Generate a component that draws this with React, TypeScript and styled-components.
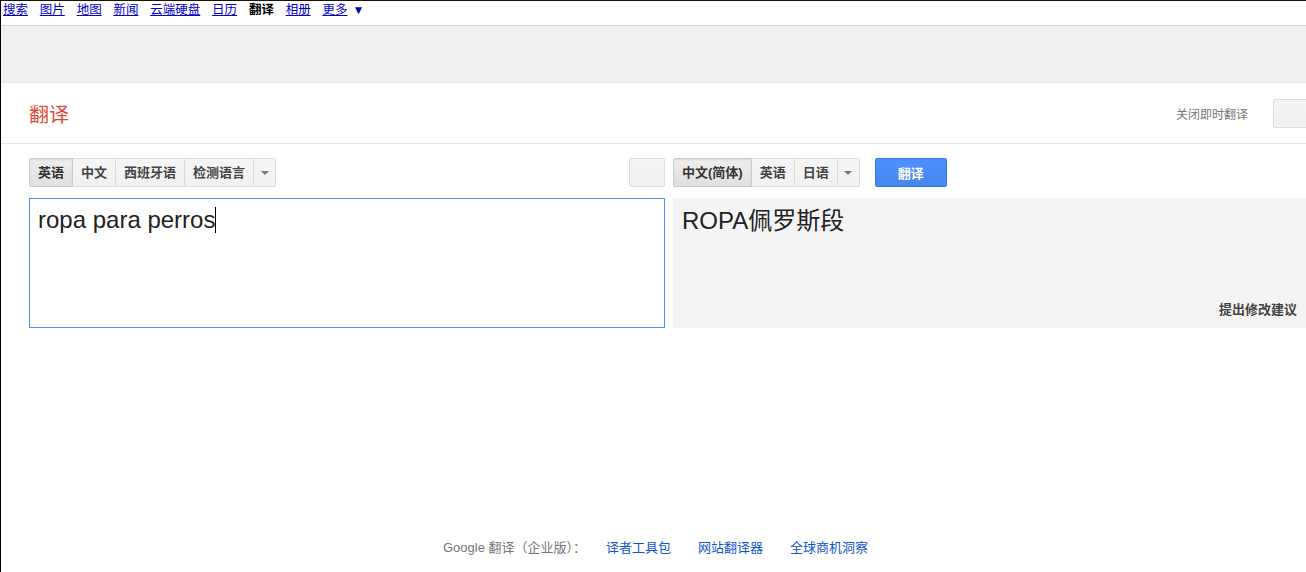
import React from "react";
import styled, { createGlobalStyle, css } from "styled-components";

const GlobalStyle = createGlobalStyle`
  *, *::before, *::after { box-sizing: border-box; }
  html, body { margin: 0; padding: 0; background: #fff; overflow: hidden; }
  body { font-family: "Liberation Sans", Arial, "Noto Sans CJK SC", sans-serif; }
`;

const CJK = `"Liberation Sans", Arial, "Noto Sans CJK SC", sans-serif`;

const Page = styled.div`
  width: 1306px;
  height: 572px;
  border-left: 1px solid #000;
  border-top: 1px solid #1e1000;
  overflow: hidden;
  display: flex;
  flex-direction: column;
  font-family: ${CJK};
`;

const NavBar = styled.nav`
  height: 25px;
  border-bottom: 1px solid #c9d7f1;
  display: flex;
  align-items: flex-start;
  gap: 11.8px;
  padding: 1px 0 0 2px;
  font-size: 12.5px;
  line-height: 17px;
`;

const NavLink = styled.a<{ $active?: boolean }>`
  color: #0000cc;
  text-decoration: underline;
  white-space: nowrap;
  cursor: pointer;
  ${(p) =>
    p.$active &&
    css`
      color: #000;
      font-weight: bold;
      text-decoration: none;
    `}
`;

const NavMore = styled.span`
  display: inline-flex;
  align-items: center;
  gap: 5px;
  color: #0000cc;
`;

const Arrow = styled.span`
  font-size: 12px;
  color: #0000cc;
`;

const Banner = styled.div`
  height: 57px;
  background: #f1f1f1;
  border-bottom: 1px solid #e5e5e5;
`;

const Header = styled.header`
  flex: none;
  width: 1350px;
  height: 61px;
  border-bottom: 1px solid #e5e5e5;
  display: flex;
  align-items: center;
  padding: 0 8px 0 28px;
`;

const Logo = styled.div`
  color: #dd4b39;
  font-size: 20px;
  line-height: 24px;
  padding-top: 3px;
`;

const HeaderRight = styled.div`
  margin-left: auto;
  display: flex;
  align-items: center;
  gap: 25px;
`;

const InstantLabel = styled.span`
  color: #777;
  font-size: 12px;
  margin-top: 1px;
`;

const InstantButton = styled.div`
  width: 70px;
  height: 29px;
  border: 1px solid #dcdcdc;
  border-radius: 2px;
  background: linear-gradient(#f5f5f5, #f1f1f1);
`;

const Main = styled.main`
  flex: none;
  padding: 14px 0 0 28px;
  width: 1400px;
`;

const Row = styled.div`
  display: flex;
  gap: 8px;
`;

const Column = styled.div`
  width: 636px;
  display: flex;
  align-items: center;
`;

const Toolbar = styled(Row)`
  height: 29px;
`;

const Segments = styled.div`
  display: flex;
  height: 29px;
`;

const SegButton = styled.button<{ $selected?: boolean }>`
  height: 29px;
  padding: 0 8px;
  margin: 0 0 0 -1px;
  border: 1px solid #dcdcdc;
  background: linear-gradient(#f5f5f5, #f1f1f1);
  color: #444;
  font-family: ${CJK};
  font-size: 13px;
  font-weight: bold;
  line-height: 27px;
  white-space: nowrap;
  cursor: default;
  &:first-child {
    margin-left: 0;
    border-radius: 2px 0 0 2px;
  }
  &:last-child {
    border-radius: 0 2px 2px 0;
  }
  ${(p) =>
    p.$selected &&
    css`
      position: relative;
      z-index: 1;
      background: linear-gradient(#eee, #e0e0e0);
      border-color: #ccc;
      color: #333;
      box-shadow: inset 0 1px 2px rgba(0, 0, 0, 0.1);
    `}
`;

const DropButton = styled(SegButton)`
  width: 23px;
  padding: 0;
  display: flex;
  align-items: center;
  justify-content: center;
`;

const Caret = styled.span`
  width: 0;
  height: 0;
  border-left: 4px solid transparent;
  border-right: 4px solid transparent;
  border-top: 4px solid #777;
`;

const SwapButton = styled.button`
  margin-left: auto;
  width: 36px;
  height: 29px;
  border: 1px solid #dcdcdc;
  border-radius: 2px;
  background: linear-gradient(#f5f5f5, #f1f1f1);
`;

const TranslateButton = styled.button`
  margin-left: 15px;
  width: 72px;
  height: 29px;
  border: 1px solid #3079ed;
  border-radius: 2px;
  background: linear-gradient(#4d90fe, #4787ed);
  color: #fff;
  font-family: ${CJK};
  font-size: 13px;
  font-weight: bold;
`;

const Panels = styled(Row)`
  margin-top: 11px;
  height: 130px;
`;

const Source = styled.div`
  width: 636px;
  height: 130px;
  border: 1px solid #4d90fe;
  padding: 7px 8px 5px;
  font-family: ${CJK};
  font-size: 24px;
  line-height: 28px;
  color: #222;
`;

const TextCaret = styled.span`
  display: inline-block;
  width: 1px;
  height: 26px;
  background: #000;
  vertical-align: -5px;
`;

const Result = styled.div`
  width: 636px;
  height: 130px;
  background: #f4f4f4;
  padding: 9px 12px 10px 9px;
  display: flex;
  flex-direction: column;
  font-family: ${CJK};
`;

const ResultText = styled.div`
  font-size: 24px;
  line-height: 28px;
  color: #222;
`;

const Suggest = styled.div`
  margin-top: auto;
  align-self: flex-end;
  font-size: 13px;
  font-weight: bold;
  color: #444;
  line-height: 16px;
`;

const Footer = styled.footer`
  margin-top: auto;
  margin-bottom: 16px;
  display: flex;
  justify-content: center;
  align-items: center;
  font-size: 13px;
  line-height: 16px;
  padding-left: 4px;
`;

const FooterLabel = styled.span`
  color: #777;
  margin-right: 20px;
`;

const FooterLink = styled.a`
  color: #1155cc;
  text-decoration: none;
  margin-right: 27px;
  &:last-child {
    margin-right: 0;
  }
`;

const navItems = ["搜索", "图片", "地图", "新闻", "云端硬盘", "日历"];

export default function App() {
  return (
    <>
      <GlobalStyle />
      <Page>
        <NavBar>
          {navItems.map((n) => (
            <NavLink key={n}>{n}</NavLink>
          ))}
          <NavLink $active>翻译</NavLink>
          <NavLink>相册</NavLink>
          <NavMore>
            <NavLink>更多</NavLink>
            <Arrow>▼</Arrow>
          </NavMore>
        </NavBar>
        <Banner />
        <Header>
          <Logo>翻译</Logo>
          <HeaderRight>
            <InstantLabel>关闭即时翻译</InstantLabel>
            <InstantButton />
          </HeaderRight>
        </Header>
        <Main>
          <Toolbar>
            <Column>
              <Segments>
                <SegButton $selected>英语</SegButton>
                <SegButton>中文</SegButton>
                <SegButton>西班牙语</SegButton>
                <SegButton>检测语言</SegButton>
                <DropButton>
                  <Caret />
                </DropButton>
              </Segments>
              <SwapButton />
            </Column>
            <Column>
              <Segments>
                <SegButton $selected>中文(简体)</SegButton>
                <SegButton>英语</SegButton>
                <SegButton>日语</SegButton>
                <DropButton>
                  <Caret />
                </DropButton>
              </Segments>
              <TranslateButton>翻译</TranslateButton>
            </Column>
          </Toolbar>
          <Panels>
            <Source>
              ropa para perros
              <TextCaret />
            </Source>
            <Result>
              <ResultText>ROPA佩罗斯段</ResultText>
              <Suggest>提出修改建议</Suggest>
            </Result>
          </Panels>
        </Main>
        <Footer>
          <FooterLabel>Google 翻译（企业版）：</FooterLabel>
          <FooterLink>译者工具包</FooterLink>
          <FooterLink>网站翻译器</FooterLink>
          <FooterLink>全球商机洞察</FooterLink>
        </Footer>
      </Page>
    </>
  );
}
